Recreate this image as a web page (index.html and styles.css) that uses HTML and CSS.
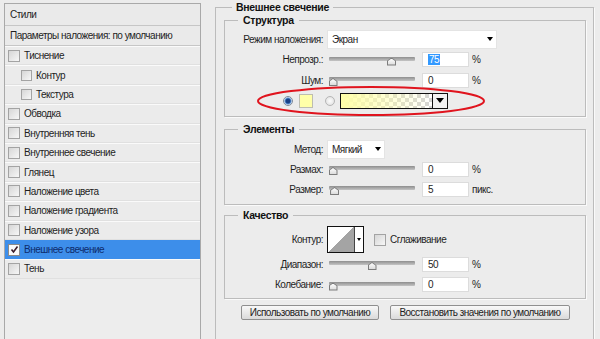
FILE: index.html
```html
<!DOCTYPE html>
<html lang="ru">
<head>
  <meta charset="UTF-8" />
  <title>Стиль слоя - Внешнее свечение</title>
  <link rel="stylesheet" href="styles.css">
</head>
<body>
  <div class="window">
    <aside class="styles-panel">
      <div class="panel-head first">Стили</div>
      <div class="panel-head">Параметры наложения: по умолчанию</div>
      <ul class="fx-list">
        <li><span class="check"></span>Тиснение</li>
        <li class="sub"><span class="check"></span>Контур</li>
        <li class="sub"><span class="check"></span>Текстура</li>
        <li><span class="check"></span>Обводка</li>
        <li><span class="check"></span>Внутренняя тень</li>
        <li><span class="check"></span>Внутреннее свечение</li>
        <li><span class="check"></span>Глянец</li>
        <li><span class="check"></span>Наложение цвета</li>
        <li><span class="check"></span>Наложение градиента</li>
        <li><span class="check"></span>Наложение узора</li>
        <li class="active">
          <span class="check checked">
            <svg width="9" height="9" viewBox="0 0 9 9"><path d="M1.5 4.5 L3.5 7 L7.5 1.5" fill="none" stroke="#3a1c2a" stroke-width="1.6"/></svg>
          </span>Внешнее свечение
        </li>
        <li><span class="check"></span>Тень</li>
      </ul>
    </aside>

    <main class="settings">
      <fieldset class="group outer">
        <legend>Внешнее свечение</legend>

        <fieldset class="group structure">
          <legend>Структура</legend>
          <div class="row">
            <span class="label">Режим наложения:</span>
            <div class="select wide">Экран<i class="arrow"></i></div>
          </div>
          <div class="row">
            <span class="label">Непрозр.:</span>
            <div class="slider"><div class="track"></div><div class="rail"><span class="thumb" style="left:75%"></span></div></div>
            <span class="field"><span class="sel">75</span></span><span class="unit">%</span>
          </div>
          <div class="row">
            <span class="label">Шум:</span>
            <div class="slider"><div class="track"></div><div class="rail"><span class="thumb" style="left:0%"></span></div></div>
            <span class="field">0</span><span class="unit">%</span>
          </div>
          <div class="row color-row">
            <span class="radio on"></span>
            <span class="swatch"></span>
            <span class="radio"></span>
            <div class="gradient-pick"><div class="gradient"></div><div class="drop"><i class="arrow big"></i></div></div>
            <svg class="mark" width="232" height="32" viewBox="0 0 232 32"><ellipse cx="116" cy="16" rx="113" ry="14" fill="none" stroke="#e0141e" stroke-width="2"/></svg>
          </div>
        </fieldset>

        <fieldset class="group elements">
          <legend>Элементы</legend>
          <div class="row">
            <span class="label">Метод:</span>
            <div class="select narrow">Мягкий<i class="arrow"></i></div>
          </div>
          <div class="row">
            <span class="label">Размах:</span>
            <div class="slider"><div class="track"></div><div class="rail"><span class="thumb" style="left:0%"></span></div></div>
            <span class="field">0</span><span class="unit">%</span>
          </div>
          <div class="row">
            <span class="label">Размер:</span>
            <div class="slider"><div class="track"></div><div class="rail"><span class="thumb" style="left:2%"></span></div></div>
            <span class="field">5</span><span class="unit">пикс.</span>
          </div>
        </fieldset>

        <fieldset class="group quality">
          <legend>Качество</legend>
          <div class="row contour-row">
            <span class="label">Контур:</span>
            <div class="contour"><div class="curve"></div><div class="drop"><i class="arrow small"></i></div></div>
            <span class="check box"></span><span class="check-label">Сглаживание</span>
          </div>
          <div class="row">
            <span class="label">Диапазон:</span>
            <div class="slider"><div class="track"></div><div class="rail"><span class="thumb" style="left:50%"></span></div></div>
            <span class="field">50</span><span class="unit">%</span>
          </div>
          <div class="row">
            <span class="label">Колебание:</span>
            <div class="slider"><div class="track"></div><div class="rail"><span class="thumb" style="left:0%"></span></div></div>
            <span class="field">0</span><span class="unit">%</span>
          </div>
        </fieldset>

        <div class="buttons">
          <button class="btn first">Использовать по умолчанию</button>
          <button class="btn second">Восстановить значения по умолчанию</button>
        </div>
      </fieldset>
    </main>
  </div>
</body>
</html>
```

FILE: styles.css
```css
* {
  box-sizing: border-box;
}
body {
  margin: 0;
  background: #ececec;
  font-family: 'Liberation Sans', Arial, sans-serif;
  font-size: 10px;
  letter-spacing: -0.5px;
  color: #1e1e1e;
  overflow: hidden;
}
.window {
  display: flex;
  align-items: flex-start;
  height: 339px;
  padding: 1px 0 0 4px;
}

/* left list of effects */
.styles-panel {
  width: 197px;
  height: 345px;
  margin-top: 2px;
  border: 1px solid #a9a9a9;
  background: #ededed;
}
.panel-head {
  height: 20px;
  line-height: 19px;
  padding-left: 5px;
  border-bottom: 1px solid #c6c6c6;
  background: #eaeaea;
}
.panel-head.first {
  height: 22px;
  line-height: 21px;
}
.fx-list {
  list-style: none;
  margin: 0;
  padding: 0;
}
.fx-list li {
  display: flex;
  align-items: center;
  height: 19.4px;
  padding-left: 3px;
  border-top: 1px solid #fafafa;
  border-bottom: 1px solid #e0e0e0;
  background: #ebebeb;
}
.fx-list li.sub {
  padding-left: 16px;
}
.fx-list li.active {
  background: #3d8eea;
  border-color: #3d8eea;
  color: #0d2c6c;
}
.check {
  display: inline-flex;
  align-items: center;
  justify-content: center;
  width: 12px;
  height: 12px;
  margin-right: 4px;
  border: 1px solid #a3a3a3;
  background: linear-gradient(135deg, #d6d6d6, #f7f7f7);
}
.sub .check {
  width: 11px;
  height: 11px;
}
.check.checked {
  background: #fafafa;
  border-color: #8a8a8a;
}

/* right side */
.settings {
  margin-left: 14px;
}
.group {
  margin: 0;
  border: 1px solid #bcbcbc;
  box-shadow: 1px 1px 0 #fafafa;
  min-width: 0;
}
.group legend {
  font-weight: bold;
  line-height: 12px;
  font-size: 10.5px;
  letter-spacing: -0.3px;
  color: #111;
}
.outer {
  width: 379px;
  padding: 1px 7px 40px 8px;
}
.outer > legend {
  margin-left: 8px;
  padding: 0 4px;
}
.outer .group {
  width: 362px;
  padding: 0;
}
.outer .group legend {
  margin-left: 13px;
  padding: 0 5px;
}
.structure {
  padding: 3px 0 5px !important;
}
.elements {
  margin-top: 6px;
  padding: 4px 0 5px !important;
}
.quality {
  margin-top: 4px;
  padding: 4px 0 3px !important;
}
.row {
  display: flex;
  align-items: center;
  height: 20.5px;
}
.elements .row {
  height: 20px;
}
.label {
  width: 98px;
  margin-right: 4px;
  text-align: right;
}
.select {
  display: flex;
  align-items: center;
  justify-content: space-between;
  height: 19px;
  padding: 0 3px 0 4px;
  background: #fff;
  border: 1px solid #e4e4e4;
}
.select.wide {
  width: 170px;
}
.select.narrow {
  width: 58px;
}
.arrow {
  width: 0;
  height: 0;
  border-left: 3.5px solid transparent;
  border-right: 3.5px solid transparent;
  border-top: 4px solid #000;
}
.arrow.big {
  border-left-width: 4.5px;
  border-right-width: 4.5px;
  border-top-width: 5px;
}
.arrow.small {
  border-left-width: 2px;
  border-right-width: 2px;
  border-top-width: 3px;
}

/* slider */
.slider {
  position: relative;
  width: 86px;
  height: 20px;
  margin-left: 2px;
  align-self: flex-start;
}
.track {
  height: 4px;
  margin-top: 7px;
  border-radius: 1px;
  background: linear-gradient(#8e8e8e, #c4c4c4);
}
.rail {
  position: absolute;
  top: 0;
  left: 4px;
  right: 4px;
  height: 100%;
}
.thumb {
  position: absolute;
  top: 8px;
  width: 9px;
  height: 8px;
  margin-left: -4.5px;
  background: #7c7c7c;
  clip-path: polygon(50% 0, 100% 40%, 100% 100%, 0 100%, 0 40%);
}
.thumb::after {
  content: "";
  position: absolute;
  inset: 1px;
  background: linear-gradient(#fdfdfd, #dcdcdc);
  clip-path: polygon(50% 0, 100% 40%, 100% 100%, 0 100%, 0 40%);
}
.field {
  width: 47px;
  height: 15px;
  margin-left: 7px;
  padding-left: 5px;
  line-height: 13px;
  background: #fff;
  border: 1px solid #dcdcdc;
}
.sel {
  background: #3399ff;
  color: #fff;
  padding: 0 1px;
}
.unit {
  margin-left: 3px;
}

/* colour row */
.color-row {
  position: relative;
  padding-left: 58px;
}
.radio {
  width: 10px;
  height: 10px;
  border-radius: 50%;
  border: 1px solid #b5b5b5;
  background: radial-gradient(circle, #fdfdfd, #dcdcdc);
}
.radio.on {
  border-color: #7f8a99;
  background: radial-gradient(circle, #173f86 0 2px, #5e94d6 3px, #e6edf6 4px);
}
.swatch {
  width: 14px;
  height: 14px;
  margin: 0 12px 0 6px;
  background: #ffffa8;
  border: 1px solid #bdbdb0;
}
.gradient-pick {
  display: flex;
  width: 108px;
  height: 16px;
  margin-left: 5px;
  border: 1px solid #111;
}
.gradient {
  flex: 1;
  background:
    linear-gradient(to right, #ffffa8, rgba(255, 255, 168, 0)),
    repeating-conic-gradient(#d4d4d4 0 25%, #ffffff 0 50%) 0 0 / 8px 8px;
}
.gradient-pick .drop {
  display: flex;
  align-items: center;
  justify-content: center;
  width: 15px;
  border-left: 1px solid #111;
  background: #f2f2f2;
}
.mark {
  position: absolute;
  left: 30px;
  top: -6px;
}

/* contour */
.contour-row {
  height: 29px !important;
}
.contour {
  display: flex;
  width: 37px;
  height: 27px;
  border: 1px solid #111;
  background: #fff;
}
.contour .curve {
  width: 26px;
  background: linear-gradient(to top left, #a4a4a4 50%, #fff 50%);
}
.contour .drop {
  display: flex;
  align-items: center;
  justify-content: center;
  flex: 1;
  border-left: 1px solid #444;
}
.check.box {
  margin: 0 4px 0 10px;
}

/* buttons */
.buttons {
  display: flex;
  gap: 11px;
  margin: 6px 0 0 17px;
}
.btn {
  height: 15px;
  padding: 0;
  font-family: inherit;
  font-size: 10px;
  letter-spacing: -0.5px;
  white-space: nowrap;
  color: #222;
  border: 1px solid #8f8f8f;
  border-radius: 2px;
  background: linear-gradient(#f8f8f8, #dadada);
}
.btn.first {
  width: 138px;
}
.btn.second {
  width: 180px;
}
```
